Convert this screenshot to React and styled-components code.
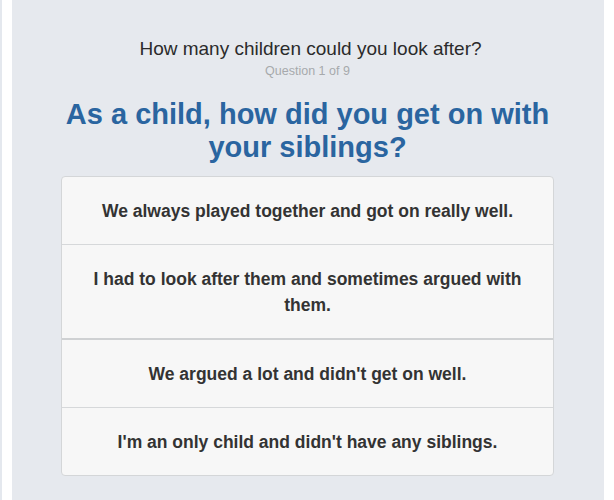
import React from 'react';
import styled, { createGlobalStyle } from 'styled-components';

const GlobalStyle = createGlobalStyle`
  html, body {
    margin: 0;
    padding: 0;
    background: #fff;
  }
  body {
    font-family: 'Liberation Sans', Arial, Helvetica, sans-serif;
    -webkit-font-smoothing: antialiased;
  }
`;

const Page = styled.div`
  border-left: 2px solid #e4e8ee;
  padding: 0 10px;
  height: 500px;
  box-sizing: border-box;
`;

const Panel = styled.div`
  background: #e6e9ee;
  height: 100%;
  padding: 37px 50px 0 49px;
  box-sizing: border-box;
`;

const Header = styled.div`
  text-align: center;
`;

const Quiz = styled.div`
  font-size: 19px;
  line-height: 24px;
  color: #2b2b2b;
  padding-left: 6px;
`;

const Counter = styled.div`
  font-size: 12.5px;
  line-height: 20px;
  color: #a7a9ac;
`;

const Question = styled.h1`
  margin: 17px 0 12px;
  font-size: 29px;
  line-height: 33px;
  font-weight: bold;
  color: #2a65a0;
  text-align: center;
`;

const Answers = styled.div`
  background: #f7f7f7;
  border: 1px solid #d4d6d8;
  border-radius: 4px;
  overflow: hidden;
`;

const Answer = styled.div`
  padding: 21px 28px 20px;
  font-size: 17.5px;
  line-height: 26px;
  font-weight: bold;
  color: #333;
  text-align: center;
  border-top: ${(p) => (p.first ? 'none' : p.thick ? '2px solid #cfd1d3' : '1px solid #d6d8da')};
`;

const answers = [
  "We always played together and got on really well.",
  "I had to look after them and sometimes argued with them.",
  "We argued a lot and didn't get on well.",
  "I'm an only child and didn't have any siblings.",
];

export default function App() {
  return (
    <>
      <GlobalStyle />
      <Page>
        <Panel>
          <Header>
            <Quiz>How many children could you look after?</Quiz>
            <Counter>Question 1 of 9</Counter>
          </Header>
          <Question>As a child, how did you get on with your siblings?</Question>
          <Answers>
            {answers.map((a, i) => (
              <Answer key={i} first={i === 0} thick={i === 2}>
                {a}
              </Answer>
            ))}
          </Answers>
        </Panel>
      </Page>
    </>
  );
}
